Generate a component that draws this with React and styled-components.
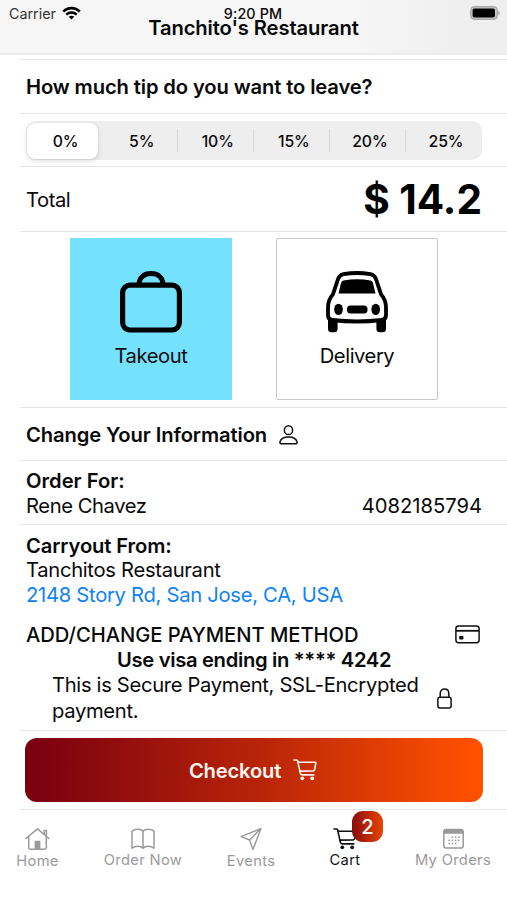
import React from 'react';
import styled, { createGlobalStyle } from 'styled-components';

const LINE = '#e6e6e7';
const INK = '#0a0a0a';
const MUTED = '#9a9a9a';

const GlobalStyle = createGlobalStyle`
  * {
    box-sizing: border-box;
  }
  body {
    margin: 0;
    background: #fff;
    color: ${INK};
    font-family: Inter, 'Liberation Sans', sans-serif;
    font-size: 20.2px;
  }
`;

const Screen = styled.div`
  width: 507px;
  height: 900px;
  overflow: hidden;
  background: #fff;
`;

const Header = styled.header`
  height: 55px;
  padding: 5px 7px 0 9px;
  background: linear-gradient(90deg, #f6f6f6 70%, #efefef 90%);
  border-bottom: 2px solid #ececec;
`;

const StatusBar = styled.div`
  display: grid;
  grid-template-columns: 1fr auto 1fr;
  height: 17px;
  font-size: 14.3px;
  line-height: 17px;
`;

const Carrier = styled.div`
  display: flex;
  gap: 6px;
  color: #333;
  svg {
    margin-top: 1px;
  }
`;

const Clock = styled.div`
  margin-right: 3px;
  font-weight: 500;
  letter-spacing: 0.15px;
`;

const Battery = styled.svg`
  justify-self: end;
  margin-top: 1px;
`;

const Title = styled.h1`
  margin: -6px 2px 0 0;
  font-size: 20.2px;
  line-height: 24px;
  font-weight: 600;
  text-align: center;
  letter-spacing: -0.1px;
`;

const List = styled.main`
  padding-left: 20px;
`;

const Row = styled.section`
  display: flex;
  align-items: center;
  justify-content: space-between;
  height: ${props => props.$height}px;
  padding: 0 25px 0 6px;
  border-bottom: 1px solid ${LINE};
`;

const EditRow = styled(Row)`
  justify-content: flex-start;
  gap: 12px;
  svg {
    margin-top: 1px;
  }
`;

const Stack = styled(Row)`
  display: block;
  padding-top: ${props => props.$top}px;
`;

const Line = styled.div`
  display: flex;
  justify-content: space-between;
  height: 24.8px;
  line-height: 24.8px;
`;

const Text = styled.span`
  font-weight: ${props => props.$weight || 400};
  letter-spacing: ${props => props.$track || 0}px;
  white-space: nowrap;
`;

const Amount = styled(Text)`
  font-size: 40.6px;
  font-weight: 700;
  color: #000;
`;

const Segments = styled.div`
  display: flex;
  width: 457px;
  height: 39px;
  margin: 1px 0 0 -0.5px;
  border-radius: 10px;
  background: #eeeeef;
`;

const Segment = styled.div`
  flex: 1;
  display: flex;
  align-items: center;
  padding: 1px 4px 1px 1px;
  font-size: 15.8px;
  font-weight: 500;
`;

const Divider = styled.i`
  width: 1px;
  height: 23px;
  margin: 8px 0 0 -1px;
  background: ${props => (props.$hidden ? 'transparent' : '#d6d6d7')};
`;

const Thumb = styled.div`
  display: flex;
  align-items: center;
  justify-content: center;
  width: 100%;
  height: 36px;
  padding: 1px 0 0 7px;
  letter-spacing: -0.15px;
  border-radius: 8px;
  ${props =>
    props.$active &&
    'background: #fff; box-shadow: 0 2px 5px rgba(0, 0, 0, 0.14), 0 0 1px rgba(0, 0, 0, 0.15);'}
`;

const Choices = styled(Row)`
  align-items: flex-start;
  justify-content: center;
  gap: 44px;
  padding: 6px 19px 0 0;
`;

const Choice = styled.div`
  display: flex;
  flex-direction: column;
  align-items: center;
  width: 162px;
  height: 162px;
  padding-top: ${props => (props.$active ? 33 : 31.5)}px;
  border: ${props => (props.$active ? 'none' : '1.5px solid #c9c9c9')};
  border-radius: ${props => (props.$active ? 0 : 2)}px;
  background: ${props => (props.$active ? '#74e1ff' : '#fff')};
  line-height: 24px;
  svg {
    flex: none;
    margin-bottom: 11px;
  }
`;

const Address = styled(Text)`
  color: #0f82f6;
`;

const PaymentHead = styled(Line)`
  margin-top: 15.3px;
  svg {
    margin: 2px 2px 0 0;
  }
`;

const CardUsed = styled(Line)`
  padding-left: 91px;
`;

const Secure = styled.div`
  display: flex;
  padding-left: 26px;
  line-height: 26.6px;
  margin-top: -1.2px;
  svg {
    margin: 16px 0 0 18px;
  }
`;

const SecureText = styled.p`
  width: 367px;
  margin: 0;
`;

const Checkout = styled.button`
  display: flex;
  align-items: center;
  justify-content: center;
  gap: 12px;
  flex: none;
  width: 458px;
  height: 64px;
  margin-left: -1px;
  padding: 0 2px 0 0;
  border: none;
  border-radius: 12px;
  background: linear-gradient(90deg, #7b0010 2%, #b92508 52%, #ff5000 97%);
  color: #fff4ef;
  font: 600 20.2px Inter, sans-serif;
`;

const TabBar = styled.nav`
  display: grid;
  grid-template-columns: 75px 136px 80px 108px 108px;
  padding-top: 17px;
`;

const Tab = styled.div`
  display: flex;
  flex-direction: column;
  align-items: center;
  color: ${props => (props.$active ? '#111' : MUTED)};
  font-size: 14.7px;
  line-height: 18px;
  letter-spacing: 0.35px;
  svg {
    display: block;
    height: 24px;
    margin-bottom: ${props => props.$gap || 0}px;
  }
`;

const IconWrap = styled.div`
  position: relative;
`;

const Badge = styled.span`
  position: absolute;
  top: -16px;
  left: 19px;
  width: 31px;
  height: 31px;
  border-radius: 11px;
  background: linear-gradient(90deg, #8a0a0c, #e84503);
  color: #fff;
  font-size: 20.2px;
  font-weight: 500;
  line-height: 31px;
  text-align: center;
  letter-spacing: 0;
`;

const WifiIcon = () => (
  <svg width="19" height="15" viewBox="0 0 19 15" fill="none" stroke="#000">
    <path d="M1.2 5.6C5.8 .9 13.2 .9 17.8 5.6" strokeWidth="2.6" />
    <path d="M4.3 8.6C7.2 5.8 11.8 5.8 14.7 8.6" strokeWidth="2.4" />
    <path d="M9.5 13.6L6.7 10.8Q9.5 8.7 12.3 10.8z" fill="#000" stroke="none" />
  </svg>
);

const BatteryIcon = () => (
  <Battery width="30" height="14" viewBox="0 0 30 14">
    <rect x=".8" y=".8" width="26.4" height="12.4" rx="3.6" fill="#ccc" stroke="#aaa" strokeWidth="1.4" />
    <rect x="2.6" y="2.6" width="22.4" height="8.8" rx="1.6" fill="#000" />
    <path d="M28.3 4.8Q30 5.6 30 7T28.3 9.2z" fill="#aaa" />
  </Battery>
);

const BagIcon = () => (
  <svg width="62" height="62" viewBox="0 0 62 62" fill="none" stroke="#000">
    <rect x="2.6" y="14.2" width="56.8" height="44.8" rx="7.5" strokeWidth="5.2" />
    <path d="M19 14C19 6 24.5 2.6 31 2.6S43 6 43 14" strokeWidth="5" />
  </svg>
);

const CarIcon = () => (
  <svg width="62" height="62" viewBox="0 0 62 62">
    <path d="M2 48h9.6v9.8q0 3.5-3.5 3.5H5.5Q2 61.3 2 57.8zM50.4 48H60v9.8q0 3.5-3.5 3.5h-2.6q-3.5 0-3.5-3.5z" />
    <path
      d="M17.5 3.2Q31 .8 44.5 3.2Q48.6 4.1 50 8.2L55 23.2Q60 28.7 60 36.7V44Q60 48.5 56 49Q31 52 6 49Q2 48.5 2 44V36.7Q2 28.7 7 23.2L12 8.2Q13.4 4.1 17.5 3.2z"
      fill="#fff"
      stroke="#000"
      strokeWidth="3.8"
    />
    <path d="M17.5 9.4Q31 7.2 44.5 9.4Q46.2 9.8 46.9 11.8L49.5 22.5H12.5L15.1 11.8Q15.8 9.8 17.5 9.4z" />
    <ellipse cx="12.5" cy="38.4" rx="4.3" ry="5.7" />
    <ellipse cx="49.7" cy="38.4" rx="4.3" ry="5.7" />
    <rect x="21" y="34.4" width="20.5" height="8" rx="3.5" />
  </svg>
);

const PersonIcon = () => (
  <svg width="19" height="20" viewBox="0 0 19 20" fill="none" stroke="#111" strokeWidth="1.5">
    <ellipse cx="9.5" cy="5.2" rx="4.1" ry="4.4" />
    <path d="M2.8 18.8Q.8 18.8 .9 17.2C1.5 14 5 11.9 9.5 11.9S17.5 14 18.1 17.2Q18.2 18.8 16.2 18.8z" />
  </svg>
);

const CreditCardIcon = () => (
  <svg width="25" height="19" viewBox="0 0 25 19" fill="none" stroke="#111" strokeWidth="1.5">
    <rect x=".9" y=".9" width="23.2" height="16.8" rx="2.6" />
    <path d="M1 5.8h23" strokeWidth="1.8" />
    <rect x="4.2" y="11" width="4.2" height="3.4" rx=".7" fill="#111" stroke="none" />
  </svg>
);

const LockIcon = () => (
  <svg width="15" height="21" viewBox="0 0 15 21" fill="none" stroke="#111" strokeWidth="1.5">
    <rect x=".9" y="9.2" width="13.2" height="10.8" rx="2" />
    <path d="M3.2 9V5.5C3.2 2.6 5 1 7.5 1s4.3 1.6 4.3 4.5V9" />
  </svg>
);

const CartIcon = () => (
  <svg
    width="24"
    height="24"
    viewBox="0 0 24 24"
    fill="none"
    stroke="currentColor"
    strokeWidth="1.6"
    strokeLinecap="round"
    strokeLinejoin="round"
  >
    <path d="M1 2h2.6q.9 0 1.1 1L7.3 15.2q.3 1.7 2 1.7H20.8" />
    <path d="M5.2 4.3H22q1 0 .8 1L21.6 11.5q-.2 1.3-1.5 1.4L7 13.1" />
    <circle cx="9.3" cy="20.3" r="1.9" fill="currentColor" stroke="none" />
    <circle cx="19.2" cy="20.3" r="1.9" fill="currentColor" stroke="none" />
  </svg>
);

const HomeIcon = () => (
  <svg
    width="25"
    height="24"
    viewBox="0 0 25 24"
    fill="none"
    stroke="currentColor"
    strokeWidth="1.5"
    strokeLinecap="round"
    strokeLinejoin="round"
  >
    <path d="M.9 11.5L12.5 1.8L24.1 11.5M19.2 6.8V3.6h2.2v5" />
    <path d="M3.7 10v10.6q0 1.6 1.6 1.6h14.4q1.6 0 1.6-1.6V10" />
    <path d="M9.6 22V14.5q0-.8.8-.8h4.2q.8 0 .8.8V22z" fill="currentColor" stroke="none" />
  </svg>
);

const BookIcon = () => (
  <svg width="24" height="24" viewBox="0 0 24 24" fill="none" stroke="currentColor" strokeWidth="1.5" strokeLinejoin="round">
    <path d="M12 4.5C10.5 1.5 3.8 1.3 1 4.3V21.3C4 18.7 10 18.7 12 21.3C14 18.7 20 18.7 23 21.3V4.3C20.2 1.3 13.5 1.5 12 4.5zV21" />
  </svg>
);

const SendIcon = () => (
  <svg width="22" height="24" viewBox="0 0 22 24" fill="none" stroke="currentColor" strokeWidth="1.4" strokeLinejoin="round">
    <path d="M21 1.5L1.2 9.7L9.6 13L12.9 22.6zL9.6 13" />
  </svg>
);

const DOTS = [
  [9.5, 12.7, 15.9],
  [6.3, 9.5, 12.7, 15.9],
  [6.3, 9.5, 12.7],
];

const CalendarIcon = () => (
  <svg width="21" height="24" viewBox="0 0 21 24" fill="currentColor">
    <rect x=".8" y="2.6" width="19.4" height="18.4" rx="2.6" fill="none" stroke="currentColor" strokeWidth="1.5" />
    <path d="M.5 6.8V4.8Q.5 2 3.3 2h14.4q2.8 0 2.8 2.8V6.8z" />
    {DOTS.map((row, y) =>
      row.map(x => (
        <rect key={`${x}-${y}`} x={x - 0.8} y={9.4 + y * 3.2} width="1.5" height="1.5" />
      ))
    )}
  </svg>
);

const TIPS = [0, 5, 10, 15, 20, 25];

const TipPicker = ({ value }) => (
  <Segments>
    {TIPS.map((tip, i) => (
      <React.Fragment key={tip}>
        <Segment>
          <Thumb $active={tip === value}>{tip}%</Thumb>
        </Segment>
        {i < TIPS.length - 1 && <Divider $hidden={tip === value} />}
      </React.Fragment>
    ))}
  </Segments>
);

const App = () => (
  <>
    <GlobalStyle />
    <Screen>
      <Header>
        <StatusBar>
          <Carrier>
            Carrier
            <WifiIcon />
          </Carrier>
          <Clock>9:20 PM</Clock>
          <BatteryIcon />
        </StatusBar>
        <Title>Tanchito's Restaurant</Title>
      </Header>
      <List>
        <Row $height={5} />
        <Row $height={54}>
          <Text $weight={600} $track={-0.12}>
            How much tip do you want to leave?
          </Text>
        </Row>
        <Row $height={53}>
          <TipPicker value={0} />
        </Row>
        <Row $height={65}>
          <Text $track={-0.45}>Total</Text>
          <Amount>$ 14.2</Amount>
        </Row>
        <Choices $height={176}>
          <Choice $active>
            <BagIcon />
            <Text $track={-0.4}>Takeout</Text>
          </Choice>
          <Choice>
            <CarIcon />
            <Text $track={-0.45}>Delivery</Text>
          </Choice>
        </Choices>
        <EditRow $height={53}>
          <Text $weight={600} $track={-0.11}>
            Change Your Information
          </Text>
          <PersonIcon />
        </EditRow>
        <Stack $height={64} $top={8}>
          <Line>
            <Text $weight={600}>Order For:</Text>
          </Line>
          <Line>
            <Text $track={-0.42}>Rene Chavez</Text>
            <Text>4082185794</Text>
          </Line>
        </Stack>
        <Stack $height={206} $top={8.7}>
          <Line>
            <Text $weight={600} $track={-0.12}>
              Carryout From:
            </Text>
          </Line>
          <Line>
            <Text $track={-0.3}>Tanchitos Restaurant</Text>
          </Line>
          <Line>
            <Address $track={-0.28}>2148 Story Rd, San Jose, CA, USA</Address>
          </Line>
          <PaymentHead>
            <Text $weight={500} $track={-0.05}>
              ADD/CHANGE PAYMENT METHOD
            </Text>
            <CreditCardIcon />
          </PaymentHead>
          <CardUsed>
            <Text $weight={600} $track={-0.32}>
              Use visa ending in **** 4242
            </Text>
          </CardUsed>
          <Secure>
            <SecureText>
              <Text $track={-0.32}>This is Secure Payment, SSL-Encrypted</Text>
              <br />
              <Text $track={-0.32}>payment.</Text>
            </SecureText>
            <LockIcon />
          </Secure>
        </Stack>
        <Row $height={79}>
          <Checkout>
            <Text $weight={600} $track={-0.2}>
              Checkout
            </Text>
            <CartIcon />
          </Checkout>
        </Row>
      </List>
      <TabBar>
        <Tab $gap={1}>
          <HomeIcon />
          Home
        </Tab>
        <Tab>
          <BookIcon />
          Order Now
        </Tab>
        <Tab $gap={1}>
          <SendIcon />
          Events
        </Tab>
        <Tab $active>
          <IconWrap>
            <CartIcon />
            <Badge>2</Badge>
          </IconWrap>
          Cart
        </Tab>
        <Tab>
          <CalendarIcon />
          My Orders
        </Tab>
      </TabBar>
    </Screen>
  </>
);

export default App;
